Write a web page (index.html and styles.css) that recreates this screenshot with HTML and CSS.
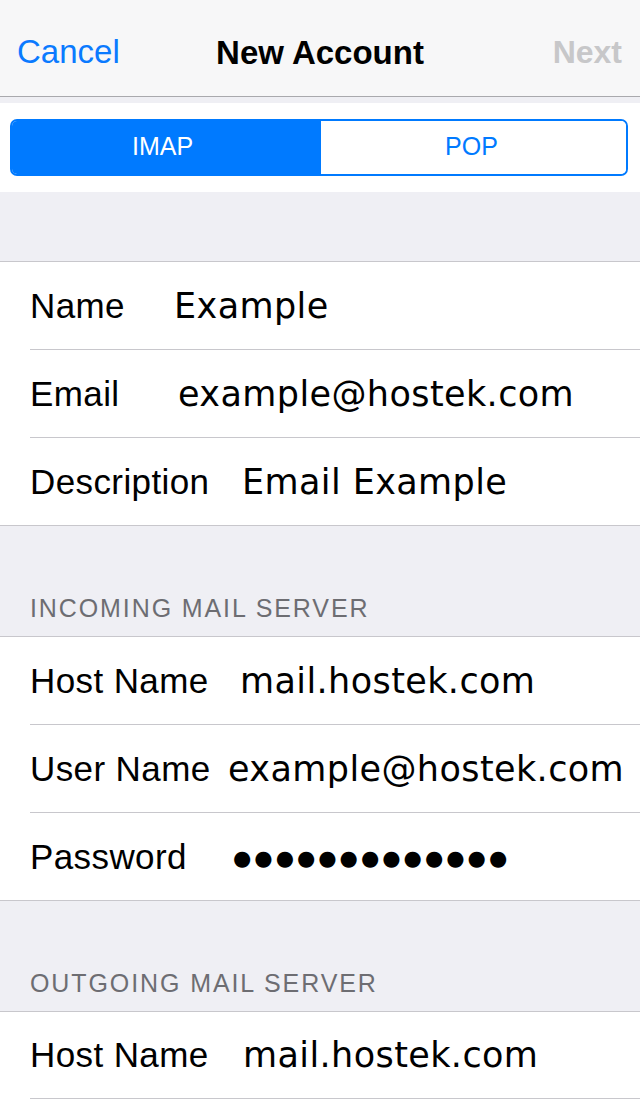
FILE: index.html
```html
<!DOCTYPE html>
<html lang="en">
<head>
<meta charset="utf-8">
<title>New Account</title>
<link rel="stylesheet" href="styles.css">
</head>
<body>
<div class="screen">
  <header class="navbar">
    <span class="nav-btn nav-cancel">Cancel</span>
    <h1 class="nav-title">New Account</h1>
    <span class="nav-btn nav-next">Next</span>
  </header>
  <div class="nav-gap"></div>
  <div class="segment-bar">
    <div class="segmented">
      <span class="seg seg-active">IMAP</span>
      <span class="seg">POP</span>
    </div>
  </div>
  <div class="spacer spacer-top"></div>
  <section class="group">
    <div class="row row--name"><span class="label">Name</span><span class="value">Example</span></div>
    <div class="row row--email"><span class="label">Email</span><span class="value">example@hostek.com</span></div>
    <div class="row row--desc"><span class="label">Description</span><span class="value">Email Example</span></div>
  </section>
  <div class="section-header">INCOMING MAIL SERVER</div>
  <section class="group">
    <div class="row row--host"><span class="label">Host Name</span><span class="value">mail.hostek.com</span></div>
    <div class="row row--user"><span class="label">User Name</span><span class="value">example@hostek.com</span></div>
    <div class="row row--pass"><span class="label">Password</span><span class="value value-dots">●●●●●●●●●●●●●</span></div>
  </section>
  <div class="section-header">OUTGOING MAIL SERVER</div>
  <section class="group group-open">
    <div class="row row--host-out"><span class="label">Host Name</span><span class="value">mail.hostek.com</span></div>
  </section>
</div>
</body>
</html>
```
FILE: styles.css
```css
* { box-sizing: border-box; }
html, body { margin: 0; padding: 0; }
body {
  width: 640px;
  height: 1104px;
  overflow: hidden;
  background: #ffffff;
  font-family: "Liberation Sans", Arial, sans-serif;
  color: #000;
}
.screen { width: 640px; }

.navbar {
  height: 97px;
  background: #f7f7f8;
  border-bottom: 1px solid #a9a9ad;
  display: flex;
  align-items: center;
  justify-content: space-between;
  padding: 8px 18px 0 17px;
  position: relative;
}
.nav-btn { font-size: 33px; line-height: 40px; }
.nav-cancel { color: #0a7aff; }
.nav-next { color: #c7c7c9; font-weight: bold; font-size: 32px; }
.nav-title {
  margin: 0;
  font-size: 33px;
  font-weight: bold;
  line-height: 40px;
  position: absolute;
  left: 0; right: 0;
  top: 33px;
  text-align: center;
  pointer-events: none;
}

.nav-gap { height: 6px; background: #efeff4; }

.segment-bar {
  background: #fff;
  padding: 16px 12px 16px 10px;
  height: 89px;
}
.segmented {
  height: 57px;
  display: flex;
  border: 2px solid #007aff;
  border-radius: 7px;
  overflow: hidden;
}
.seg {
  flex: 1;
  display: flex;
  align-items: center;
  justify-content: center;
  font-size: 25px;
  color: #007aff;
  background: #fff;
  padding-bottom: 3px;
}
.seg-active { background: #007aff; color: #fff; padding-right: 8px; }
.seg:last-child { padding-right: 4px; }

.spacer { background: #efeff4; }
.spacer-top { height: 69px; }

.group {
  background: #fff;
  border-top: 1px solid #c8c7cc;
  border-bottom: 1px solid #c8c7cc;
}
.group-open { border-bottom: none; }
.row {
  margin-left: 30px;
  height: 88px;
  border-bottom: 1px solid #c8c7cc;
  display: grid;
  align-items: center;
}
.group .row:last-child { border-bottom: none; height: 87px; }
.group-open .row:last-child { border-bottom: 1px solid #c8c7cc; height: 87px; }

.label {
  font-size: 35px;
  letter-spacing: 0.4px;
  white-space: nowrap;
}
.value {
  font-family: "DejaVu Sans", Verdana, sans-serif;
  font-size: 35px;
  letter-spacing: 0.4px;
  white-space: nowrap;
}
.value-dots {
  font-size: 21px;
  letter-spacing: 3px;
  padding-top: 2px;
}

.row--name { grid-template-columns: 144px 1fr; }
.row--email { grid-template-columns: 148px 1fr; }
.row--desc { grid-template-columns: 212px 1fr; }
.row--host { grid-template-columns: 210px 1fr; }
.row--user { grid-template-columns: 198px 1fr; }
.row--pass { grid-template-columns: 203px 1fr; }
.row--host-out { grid-template-columns: 213px 1fr; }

.section-header {
  height: 110px;
  background: #efeff4;
  display: flex;
  align-items: flex-end;
  padding: 0 0 14px 30px;
  font-size: 25px;
  line-height: 28px;
  letter-spacing: 1.9px;
  color: #6d6d72;
}
```
